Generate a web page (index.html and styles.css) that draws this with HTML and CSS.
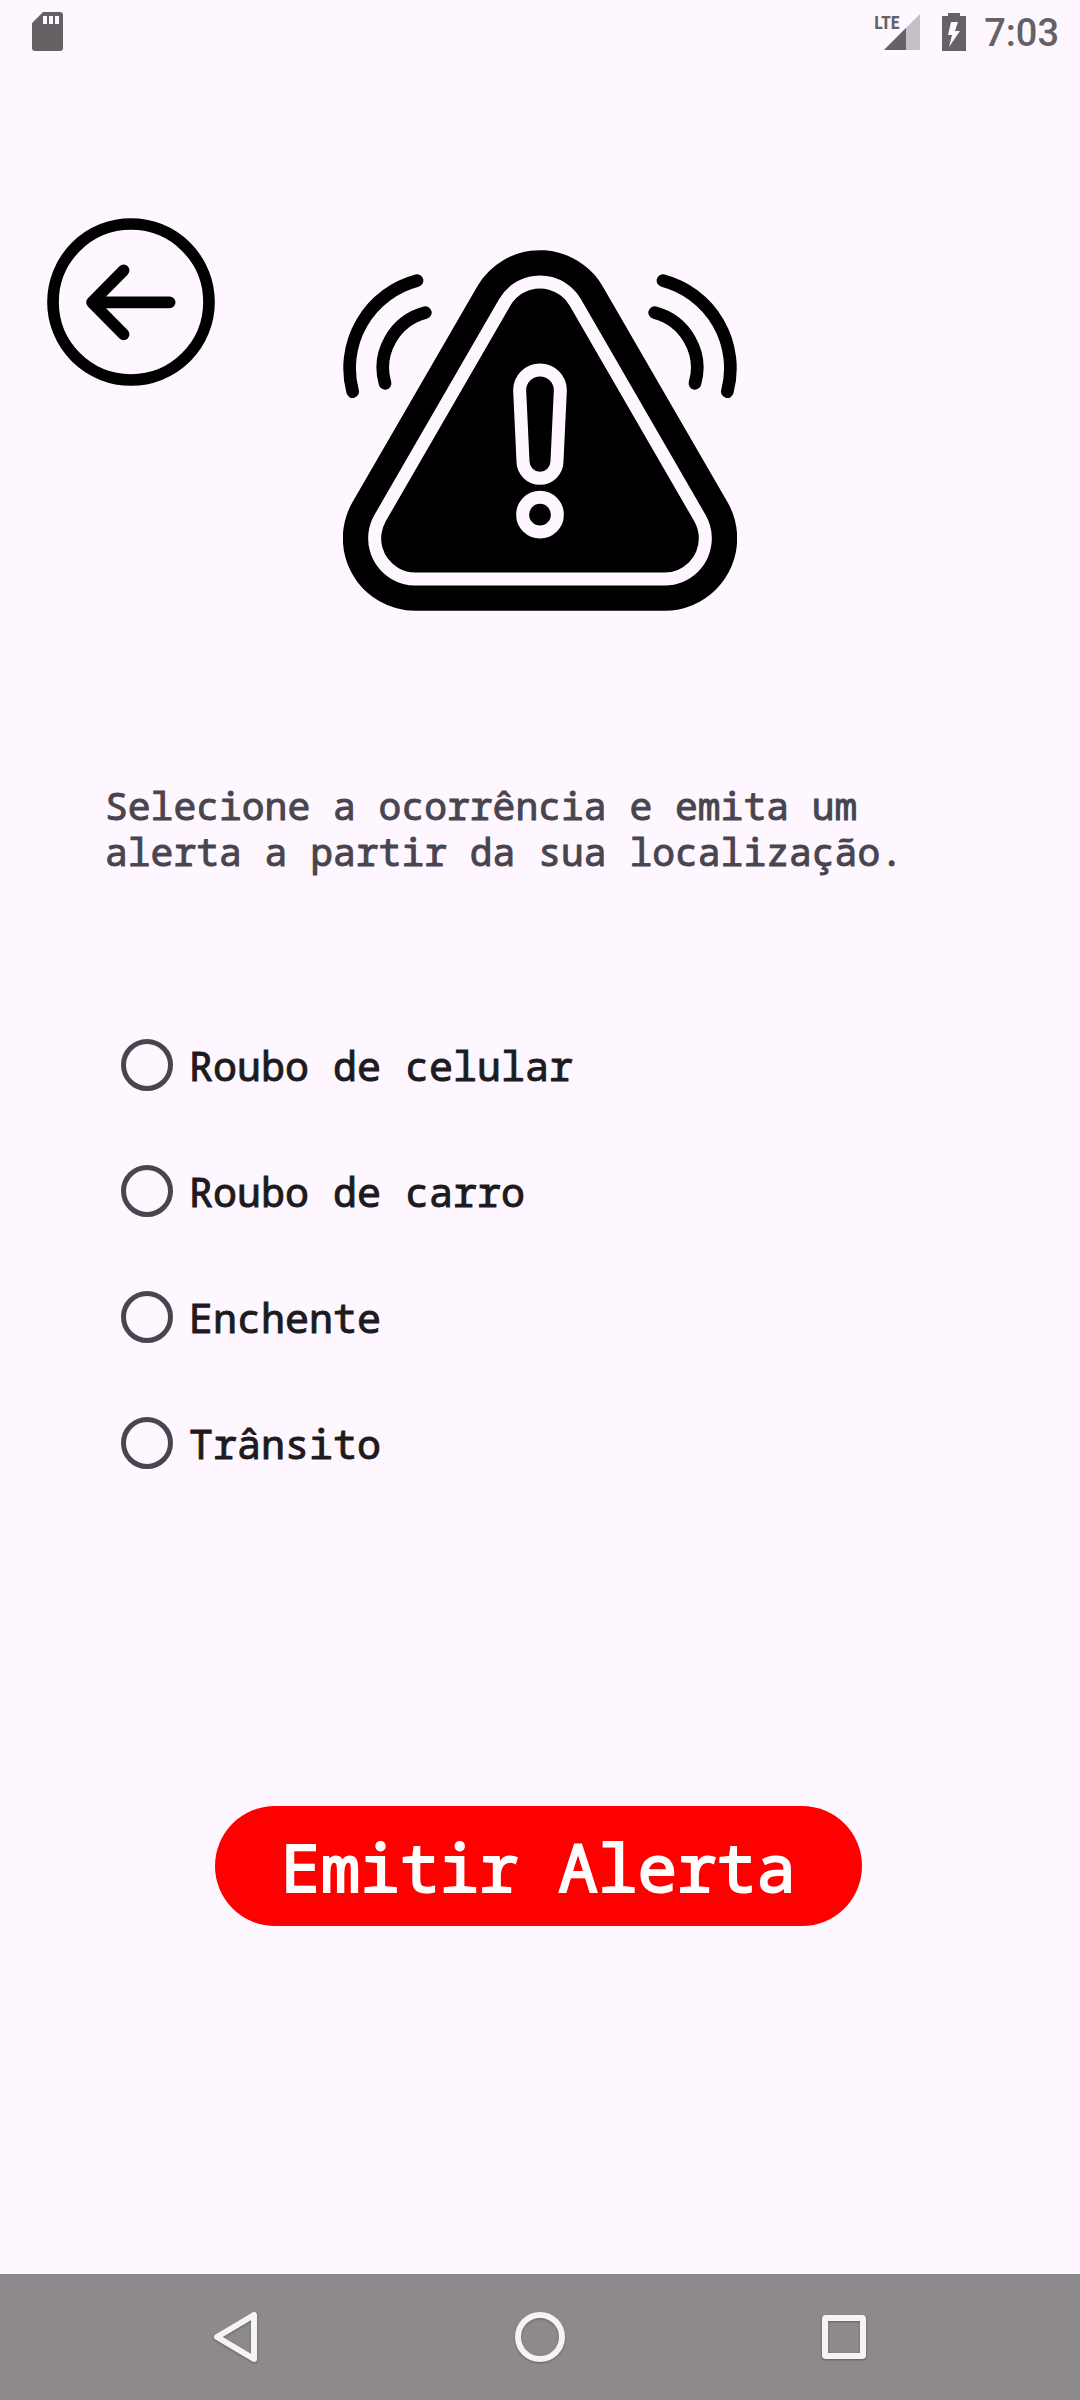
FILE: index.html
```html
<!DOCTYPE html>
<html lang="pt-BR">
<head>
<meta charset="utf-8">
<meta name="viewport" content="width=device-width, initial-scale=1">
<title>Emitir Alerta</title>
<link rel="stylesheet" href="styles.css">
</head>
<body>
<header class="status">
  <svg class="status-sd" width="32" height="40" viewBox="0 0 32 40" aria-hidden="true">
    <path fill="currentColor" fill-rule="evenodd" d="M11 0H28Q31 0 31 3V36Q31 39 28 39H3Q0 39 0 36V11ZM11 4V12H15V4ZM17 4V12H21V4ZM23 4V12H27V4Z"/>
  </svg>
  <div class="status-right">
    <div class="signal">
      <span class="signal-type">LTE</span>
      <svg width="36" height="36" viewBox="0 0 36 36" aria-hidden="true">
        <path fill="#c4bec5" d="M36 0V36H0Z"/>
        <path fill="currentColor" d="M22 14V36H0Z"/>
      </svg>
    </div>
    <svg width="24" height="38" viewBox="0 0 24 38" aria-hidden="true">
      <path fill="currentColor" d="M6 0H18V3H24V38H0V3H6Z"/>
      <path fill="#fef7ff" d="M9 9H16L13 18H18L7 34L10 22H6Z"/>
    </svg>
    <time class="clock">7:03</time>
  </div>
</header>

<main class="screen">
  <div class="hero">
    <button class="back" type="button" aria-label="Voltar">
      <svg width="168" height="168" viewBox="51 53 504 504" fill="none" stroke="#000" stroke-width="35" stroke-linecap="round" stroke-linejoin="round" aria-hidden="true">
        <circle cx="303" cy="305" r="234"/>
        <path d="M419 306H186M281 210L186 306L281 402"/>
      </svg>
    </button>
    <svg class="alert" width="394" height="361" viewBox="39 59 1182 1083" fill="none" stroke-linecap="round" stroke-linejoin="round" aria-hidden="true">
      <g stroke="#000" stroke-width="38">
        <path d="M261 151A272 272 0 0 0 68 484M286 247A171 171 0 0 0 165 459"/>
        <path d="M999 151A272 272 0 0 1 1192 484M974 247A171 171 0 0 1 1095 459"/>
      </g>
      <path d="M256 924H1004L630 277Z" stroke="#000" stroke-width="435"/>
      <path d="M256 924H1004L630 277Z" stroke="#fef7ff" stroke-width="283"/>
      <path d="M256 924H1004L630 277Z" stroke="#000" stroke-width="205" fill="#000"/>
      <g stroke="#fef7ff" stroke-width="39">
        <path d="M569 480A61 61 0 0 1 691 480L681 693A51 51 0 0 1 579 693Z"/>
        <circle cx="630" cy="853" r="52"/>
      </g>
    </svg>
  </div>

  <form class="report">
    <fieldset class="options">
      <legend class="prompt">Selecione a ocorrência e emita um alerta a partir da sua localização.</legend>
      <label class="option"><input type="radio" name="ocorrencia" value="celular">Roubo de celular</label>
      <label class="option"><input type="radio" name="ocorrencia" value="carro">Roubo de carro</label>
      <label class="option"><input type="radio" name="ocorrencia" value="enchente">Enchente</label>
      <label class="option"><input type="radio" name="ocorrencia" value="transito">Trânsito</label>
    </fieldset>
    <button class="submit" type="button">Emitir Alerta</button>
  </form>
</main>

<nav class="navbar" aria-label="Sistema">
  <button type="button" aria-label="Voltar">
    <svg width="56" height="56" viewBox="0 0 56 56" aria-hidden="true"><path d="M46 6V50L9 28Z"/></svg>
  </button>
  <button type="button" aria-label="Início">
    <svg width="56" height="56" viewBox="0 0 56 56" aria-hidden="true"><circle cx="28" cy="28" r="22"/></svg>
  </button>
  <button type="button" aria-label="Recentes">
    <svg width="56" height="56" viewBox="0 0 56 56" aria-hidden="true"><rect x="9" y="9" width="38" height="38" rx="1"/></svg>
  </button>
</nav>
</body>
</html>
```
FILE: styles.css
```css
* {
  box-sizing: border-box;
}

body {
  margin: 0;
  min-height: 100vh;
  display: flex;
  flex-direction: column;
  background: #fef7ff;
  color: #1d1b20;
  font-family: "Noto Sans Mono", "Droid Sans Mono", "DejaVu Sans Mono", monospace;
}

button {
  padding: 0;
  border: 0;
  background: none;
  font: inherit;
  cursor: pointer;
}

svg {
  display: block;
}

.status {
  display: flex;
  justify-content: space-between;
  align-items: center;
  height: 64px;
  padding: 0 21px 0 32px;
  color: #656165;
  font-family: Roboto, sans-serif;
}

.status-right {
  display: flex;
  align-items: center;
  gap: 18px;
}

.signal {
  position: relative;
  padding-left: 10px;
  margin-right: 4px;
}

.signal-type {
  position: absolute;
  top: 0;
  left: 0;
  font: bold 18px/18px "Roboto Condensed", "Liberation Sans Narrow", Roboto, sans-serif;
}

.clock {
  padding-top: 2px;
  font-size: 38px;
  line-height: 44px;
  font-weight: 500;
}

.screen {
  flex: 1;
}

.hero {
  display: grid;
  grid-template-columns: 1fr auto 1fr;
  align-items: start;
  padding: 154px 47px 0;
}

.back {
  justify-self: start;
  border-radius: 50%;
}

.alert {
  margin-top: 32px;
}

.report {
  display: flex;
  flex-direction: column;
  align-items: center;
  padding: 171px 108px 0 105px;
}

.options {
  align-self: stretch;
  margin: 0;
  padding: 0;
  border: 0;
}

.prompt {
  max-width: 840px;
  margin-bottom: 128px;
  padding: 0;
  color: #49454f;
  font-size: 38px;
  line-height: 46px;
  -webkit-text-stroke: 1px;
}

.option {
  display: flex;
  align-items: center;
  gap: 16px;
  height: 126px;
  padding-left: 16px;
  font-size: 40px;
  -webkit-text-stroke: 1px;
}

.option input {
  appearance: none;
  width: 52px;
  height: 52px;
  margin: 0;
  border: 5px solid #49454f;
  border-radius: 50%;
}

.option input:checked {
  background: radial-gradient(#6750a4 50%, transparent 52%);
}

.submit {
  height: 120px;
  margin-top: 300px;
  padding: 0 66px;
  border-radius: 60px;
  background: #f00;
  color: #fff;
  font-size: 66px;
  -webkit-text-stroke: 2px;
}

.navbar {
  display: flex;
  justify-content: center;
  align-items: center;
  gap: 248px;
  height: 126px;
  background: #8e898d;
}

.navbar svg {
  fill: none;
  stroke: #f4f4f4;
  stroke-width: 6;
  stroke-linejoin: round;
  filter: drop-shadow(0 1px 1px rgba(0, 0, 0, 0.3));
}
```
